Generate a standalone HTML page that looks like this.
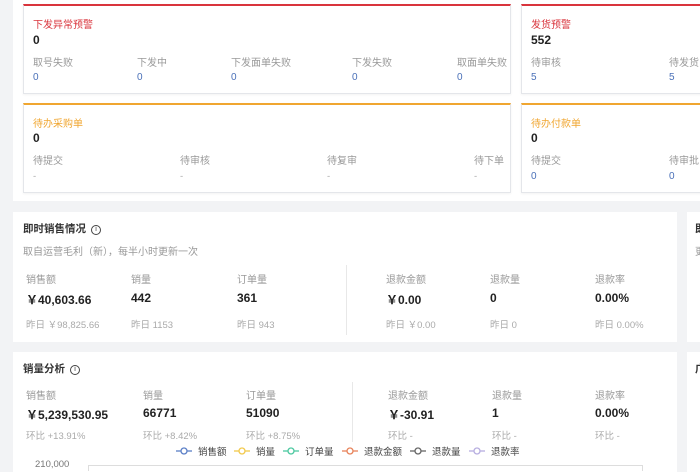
<!DOCTYPE html><html><head><meta charset="utf-8"><style>
*{margin:0;padding:0;box-sizing:border-box}
body{width:700px;height:470px;overflow:hidden;background:#f2f3f5;font-family:"Liberation Sans","Noto Sans CJK SC",sans-serif;position:relative;color:#333}
.a{position:absolute;white-space:nowrap}
.w{position:absolute;background:#fff}
.card{position:absolute;background:#fff;border:1px solid #e4e6ea;box-shadow:0 1px 2px rgba(0,0,0,.05)}
.t{font-size:10px}
.l{font-size:10px;color:#999}
.v{font-size:10px;color:#4a70b8}
.n{font-size:12px;font-weight:bold;color:#222}
.big{font-size:12px;font-weight:bold;color:#222}
.y{font-size:9.5px;color:#aaa}
.i{display:inline-block;width:10px;height:10px;border:1px solid #444;border-radius:50%;font-size:7px;text-align:center;line-height:8px;vertical-align:1px;margin-left:5px;font-weight:normal}
</style></head><body>
<div class="w" style="left:13px;top:0;width:687px;height:201px"></div>
<div class="card" style="left:23px;top:4px;width:488px;height:90px;border-top:2px solid #d9343c"></div>
<div class="card" style="left:521px;top:4px;width:190px;height:90px;border-top:2px solid #d9343c"></div>
<div class="card" style="left:23px;top:103px;width:488px;height:90px;border-top:2px solid #f0a630"></div>
<div class="card" style="left:521px;top:103px;width:190px;height:90px;border-top:2px solid #f0a630"></div>
<div class="a t" style="left:33px;top:16px;color:#d9343c">下发异常预警</div>
<div class="a n" style="left:33px;top:33px">0</div>
<div class="a l" style="left:33px;top:54px">取号失败</div><div class="a v" style="left:33px;top:72px">0</div>
<div class="a l" style="left:137px;top:54px">下发中</div><div class="a v" style="left:137px;top:72px">0</div>
<div class="a l" style="left:231px;top:54px">下发面单失败</div><div class="a v" style="left:231px;top:72px">0</div>
<div class="a l" style="left:352px;top:54px">下发失败</div><div class="a v" style="left:352px;top:72px">0</div>
<div class="a l" style="left:457px;top:54px">取面单失败</div><div class="a v" style="left:457px;top:72px">0</div>
<div class="a t" style="left:531px;top:16px;color:#d9343c">发货预警</div>
<div class="a n" style="left:531px;top:33px">552</div>
<div class="a l" style="left:531px;top:54px">待审核</div><div class="a v" style="left:531px;top:72px">5</div>
<div class="a l" style="left:669px;top:54px">待发货</div><div class="a v" style="left:669px;top:72px">5</div>
<div class="a t" style="left:33px;top:115px;color:#f0a630">待办采购单</div>
<div class="a n" style="left:33px;top:131px">0</div>
<div class="a l" style="left:33px;top:152px">待提交</div><div class="a y" style="left:33px;top:171px">-</div>
<div class="a l" style="left:180px;top:152px">待审核</div><div class="a y" style="left:180px;top:171px">-</div>
<div class="a l" style="left:327px;top:152px">待复审</div><div class="a y" style="left:327px;top:171px">-</div>
<div class="a l" style="left:474px;top:152px">待下单</div><div class="a y" style="left:474px;top:171px">-</div>
<div class="a t" style="left:531px;top:115px;color:#f0a630">待办付款单</div>
<div class="a n" style="left:531px;top:131px">0</div>
<div class="a l" style="left:531px;top:152px">待提交</div><div class="a v" style="left:531px;top:171px">0</div>
<div class="a l" style="left:669px;top:152px">待审批</div><div class="a v" style="left:669px;top:171px">0</div>

<div class="w" style="left:13px;top:212px;width:664px;height:130px"></div>
<div class="w" style="left:687px;top:212px;width:20px;height:130px"></div>
<div class="a" style="left:695px;top:221px;font-size:10.5px;font-weight:bold">即</div>
<div class="a l" style="left:695px;top:243px">更</div>
<div class="a" style="left:23px;top:221px;font-size:10.5px;font-weight:bold">即时销售情况<span class="i">i</span></div>
<div class="a l" style="left:23px;top:243px">取自运营毛利（新），每半小时更新一次</div>
<div class="a" style="left:346px;top:265px;width:1px;height:70px;background:#e8e8e8"></div>
<div class="a l" style="left:26px;top:271px">销售额</div><div class="a big" style="left:26px;top:291px">￥40,603.66</div><div class="a y" style="left:26px;top:317px">昨日 ￥98,825.66</div>
<div class="a l" style="left:131px;top:271px">销量</div><div class="a big" style="left:131px;top:291px">442</div><div class="a y" style="left:131px;top:317px">昨日 1153</div>
<div class="a l" style="left:237px;top:271px">订单量</div><div class="a big" style="left:237px;top:291px">361</div><div class="a y" style="left:237px;top:317px">昨日 943</div>
<div class="a l" style="left:386px;top:271px">退款金额</div><div class="a big" style="left:386px;top:291px">￥0.00</div><div class="a y" style="left:386px;top:317px">昨日 ￥0.00</div>
<div class="a l" style="left:490px;top:271px">退款量</div><div class="a big" style="left:490px;top:291px">0</div><div class="a y" style="left:490px;top:317px">昨日 0</div>
<div class="a l" style="left:595px;top:271px">退款率</div><div class="a big" style="left:595px;top:291px">0.00%</div><div class="a y" style="left:595px;top:317px">昨日 0.00%</div>

<div class="w" style="left:13px;top:352px;width:664px;height:120px"></div>
<div class="w" style="left:687px;top:352px;width:20px;height:120px"></div>
<div class="a" style="left:695px;top:361px;font-size:10.5px;font-weight:bold">广</div>
<div class="a" style="left:23px;top:361px;font-size:10.5px;font-weight:bold">销量分析<span class="i">i</span></div>
<div class="a" style="left:352px;top:382px;width:1px;height:60px;background:#e8e8e8"></div>
<div class="a l" style="left:26px;top:387px">销售额</div><div class="a big" style="left:26px;top:406px">￥5,239,530.95</div><div class="a y" style="left:26px;top:428px">环比 +13.91%</div>
<div class="a l" style="left:143px;top:387px">销量</div><div class="a big" style="left:143px;top:406px">66771</div><div class="a y" style="left:143px;top:428px">环比 +8.42%</div>
<div class="a l" style="left:246px;top:387px">订单量</div><div class="a big" style="left:246px;top:406px">51090</div><div class="a y" style="left:246px;top:428px">环比 +8.75%</div>
<div class="a l" style="left:388px;top:387px">退款金额</div><div class="a big" style="left:388px;top:406px">￥-30.91</div><div class="a y" style="left:388px;top:428px">环比 -</div>
<div class="a l" style="left:492px;top:387px">退款量</div><div class="a big" style="left:492px;top:406px">1</div><div class="a y" style="left:492px;top:428px">环比 -</div>
<div class="a l" style="left:595px;top:387px">退款率</div><div class="a big" style="left:595px;top:406px">0.00%</div><div class="a y" style="left:595px;top:428px">环比 -</div>
<svg class="a" style="left:170px;top:444px" width="360" height="14" font-size="9.5" font-family="Liberation Sans,Noto Sans CJK SC,sans-serif" fill="#444">
<g stroke-width="1.3" fill="#fff">
<line x1="6" y1="7" x2="22" y2="7" stroke="#5b7fc7"/><circle cx="14" cy="7" r="3" stroke="#5b7fc7"/>
<line x1="64" y1="7" x2="80" y2="7" stroke="#f2c94c"/><circle cx="72" cy="7" r="3" stroke="#f2c94c"/>
<line x1="113" y1="7" x2="129" y2="7" stroke="#4cc8a0"/><circle cx="121" cy="7" r="3" stroke="#4cc8a0"/>
<line x1="172" y1="7" x2="188" y2="7" stroke="#e8835a"/><circle cx="180" cy="7" r="3" stroke="#e8835a"/>
<line x1="240" y1="7" x2="256" y2="7" stroke="#666"/><circle cx="248" cy="7" r="3" stroke="#666"/>
<line x1="299" y1="7" x2="315" y2="7" stroke="#b7aee0"/><circle cx="307" cy="7" r="3" stroke="#b7aee0"/>
</g>
<text x="28" y="11">销售额</text><text x="86" y="11">销量</text><text x="135" y="11">订单量</text><text x="194" y="11">退款金额</text><text x="262" y="11">退款量</text><text x="321" y="11">退款率</text>
</svg>
<div class="a y" style="left:35px;top:459px;color:#777">210,000</div>
<div class="a" style="left:88px;top:465px;width:555px;height:6px;border:1px solid #ddd;border-bottom:none"></div>
</body></html>
